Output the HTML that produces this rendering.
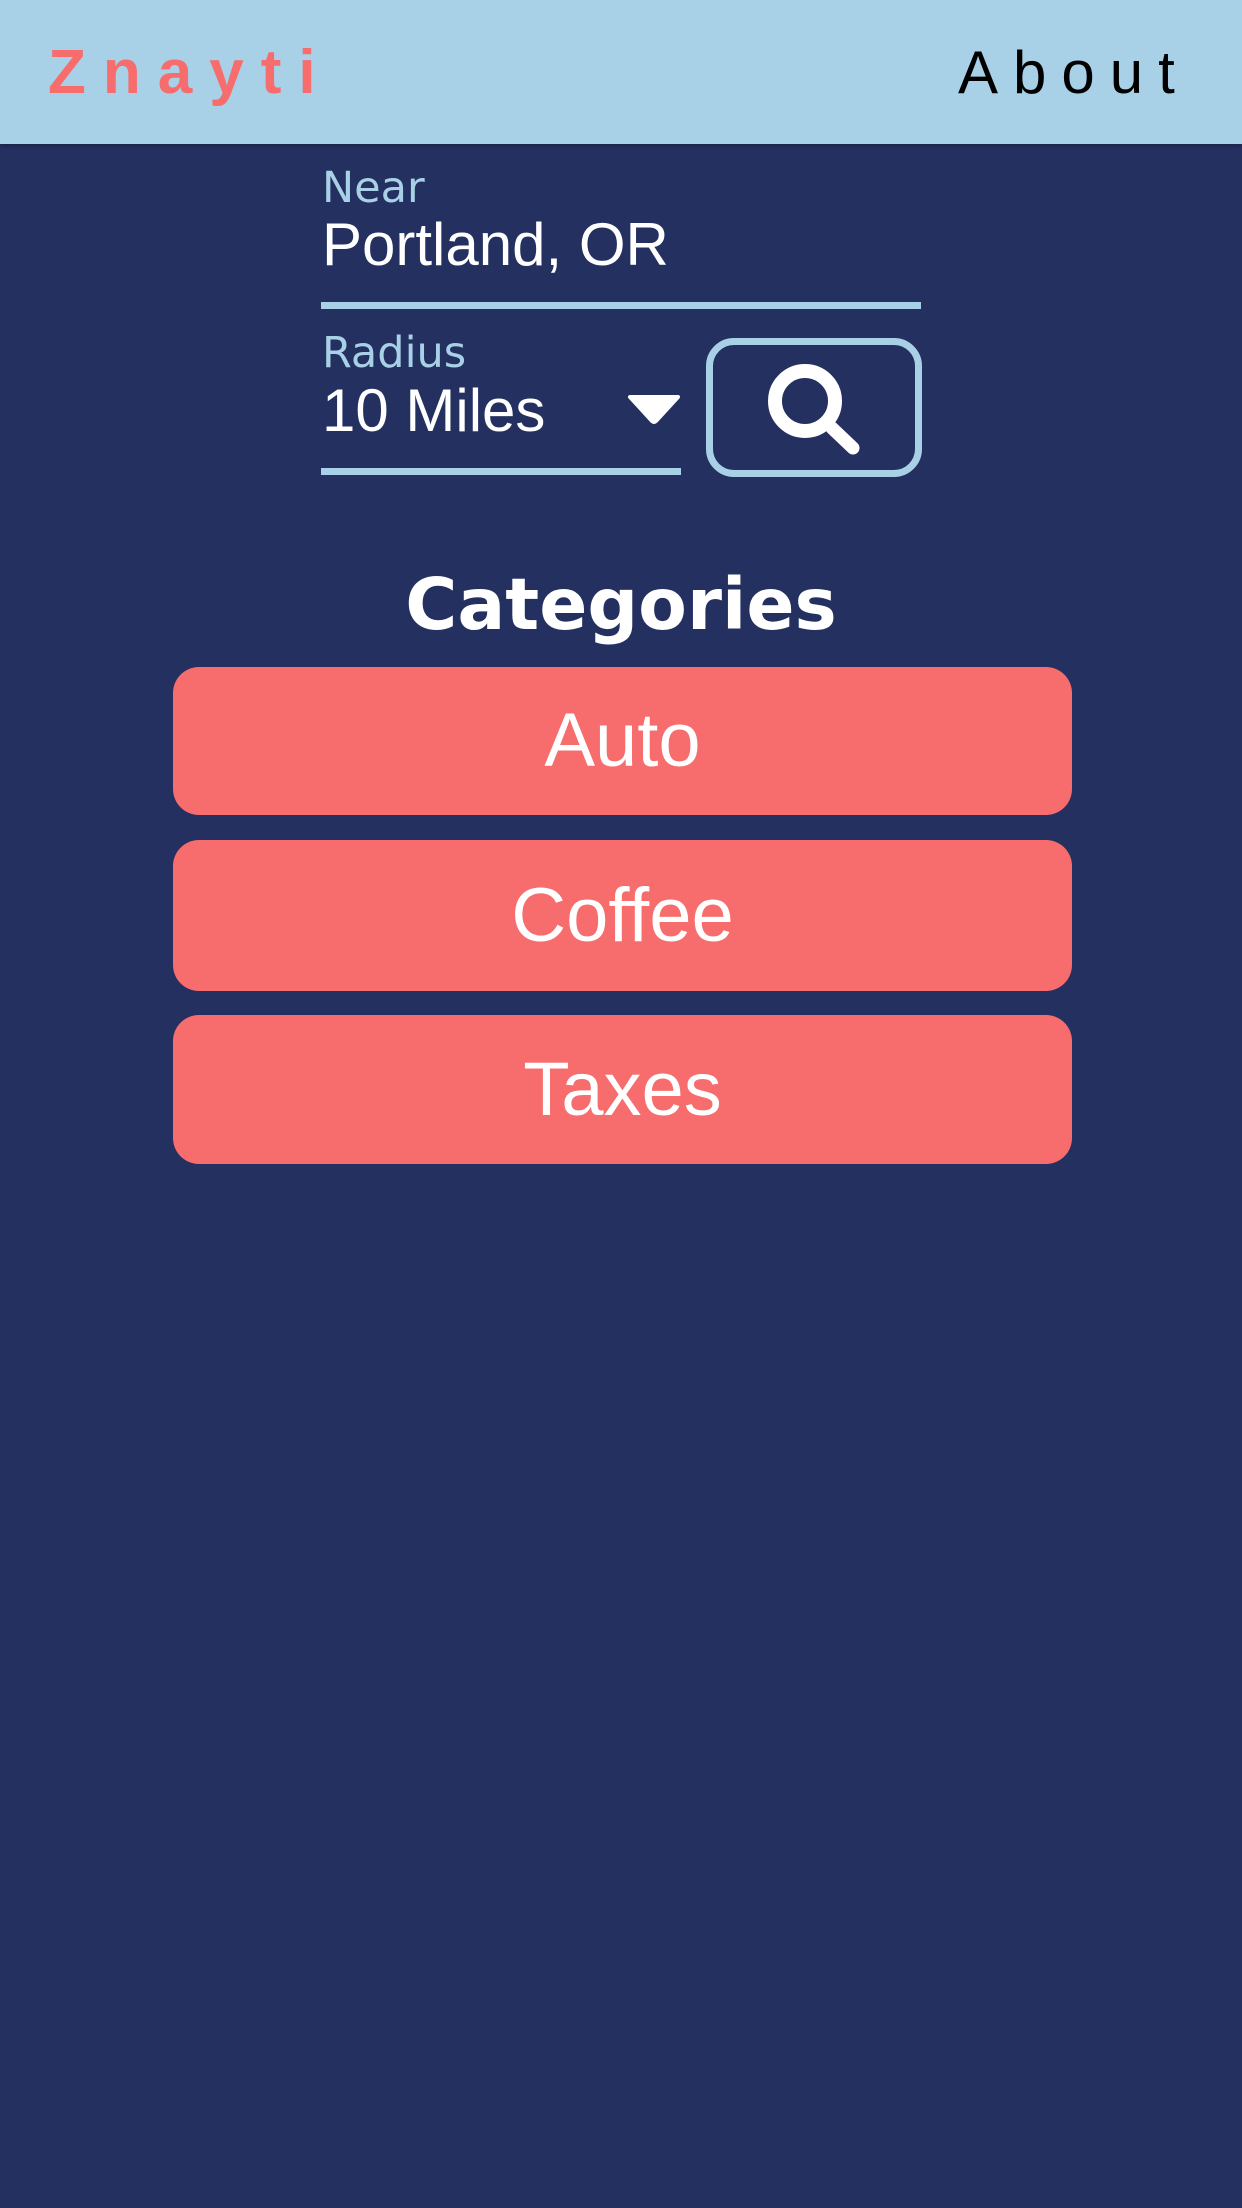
<!DOCTYPE html>
<html><head><meta charset="utf-8"><style>
*{margin:0;padding:0;box-sizing:border-box}
body{width:1242px;height:2208px;background:#243060;position:relative;overflow:hidden;font-family:"Liberation Sans",sans-serif}
.hdr{position:absolute;left:0;top:0;width:1242px;height:144px;background:#a8d0e6;box-shadow:0 2px 4px rgba(0,0,0,.3)}
.logo{position:absolute;left:48px;top:38px;font-size:62px;font-weight:bold;color:#f76c6c;letter-spacing:17px;line-height:70px}
.about{position:absolute;left:958px;top:38px;font-size:60px;color:#000;letter-spacing:15px;line-height:70px}
.lbl{position:absolute;left:322px;font-family:"DejaVu Sans",sans-serif;color:#a8d0e6;font-size:43px;line-height:50px}
.val{position:absolute;left:322px;color:#fff;font-size:60px;line-height:66px}
.line{position:absolute;background:#a8d0e6;height:7px}
.btn{position:absolute;left:706px;top:338px;width:216px;height:139px;border:7px solid #a8d0e6;border-radius:28px}
h2{position:absolute;left:0;width:1242px;top:560px;text-align:center;font-family:"DejaVu Sans",sans-serif;font-weight:bold;font-size:71px;color:#fff;line-height:90px}
.cat{position:absolute;left:173px;width:899px;background:#f76c6c;border-radius:26px;color:#fff;text-align:center;font-size:76px}
</style></head><body>
<div class="hdr"><div class="logo">Znayti</div><div class="about">About</div></div>
<div class="lbl" style="top:163px">Near</div>
<div class="val" style="top:212px">Portland, OR</div>
<div class="line" style="left:321px;top:302px;width:600px"></div>
<div class="lbl" style="top:328px">Radius</div>
<div class="val" style="top:378px">10 Miles</div>
<svg style="position:absolute;left:626px;top:393px" width="56" height="34"><path d="M4 4 L52 4 L30 28 Q28 30 26 28 Z" fill="#fff" stroke="#fff" stroke-width="4" stroke-linejoin="round"/></svg>
<div class="line" style="left:321px;top:468px;width:360px"></div>
<div class="btn"></div>
<svg style="position:absolute;left:700px;top:330px" width="230" height="155"><circle cx="105" cy="71" r="30" fill="none" stroke="#fff" stroke-width="14"/><line x1="132" y1="98" x2="153" y2="118" stroke="#fff" stroke-width="13" stroke-linecap="round"/></svg>
<h2>Categories</h2>
<div class="cat" style="top:667px;height:148px;line-height:148px">Auto</div>
<div class="cat" style="top:840px;height:151px;line-height:151px">Coffee</div>
<div class="cat" style="top:1015px;height:149px;line-height:149px">Taxes</div>
</body></html>
